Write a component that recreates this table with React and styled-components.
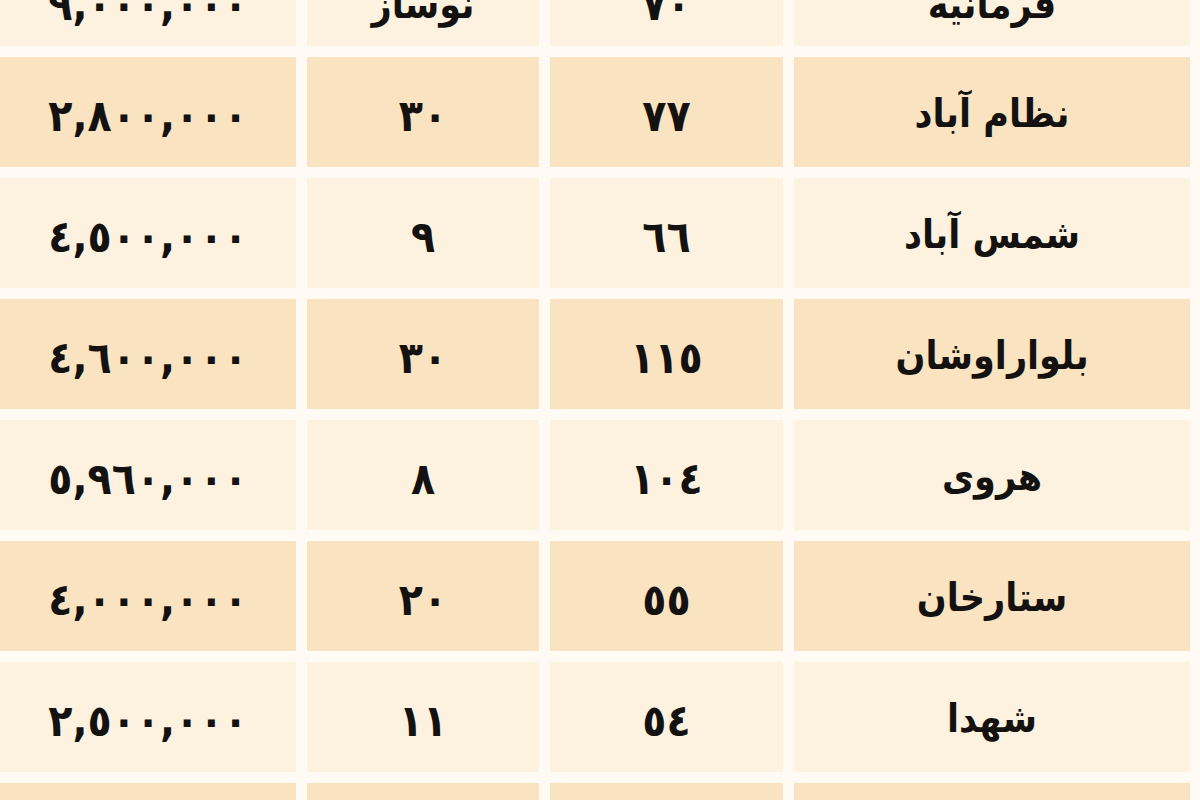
import React from 'react'
import styled, { createGlobalStyle } from 'styled-components'

const GlobalStyle = createGlobalStyle`
    html, body {
        margin: 0;
        padding: 0;
        background: #fffaf3;
    }
    body {
        font-family: "DejaVu Sans", "Noto Sans", sans-serif;
    }
`

const rows = [
    { name: 'فرمانیه', area: '٧٠', age: 'نوساز', price: '٩,٠٠٠,٠٠٠' },
    { name: 'نظام آباد', area: '٧٧', age: '٣٠', price: '٢,٨٠٠,٠٠٠' },
    { name: 'شمس آباد', area: '٦٦', age: '٩', price: '٤,٥٠٠,٠٠٠' },
    { name: 'بلواراوشان', area: '١١٥', age: '٣٠', price: '٤,٦٠٠,٠٠٠' },
    { name: 'هروی', area: '١٠٤', age: '٨', price: '٥,٩٦٠,٠٠٠' },
    { name: 'ستارخان', area: '٥٥', age: '٢٠', price: '٤,٠٠٠,٠٠٠' },
    { name: 'شهدا', area: '٥٤', age: '١١', price: '٢,٥٠٠,٠٠٠' },
    { name: 'پونک', area: '٦٠', age: '٥', price: '٣,٢٠٠,٠٠٠' },
]

const App = () => {
    return (
        <>
            <GlobalStyle />
            <Viewport>
                <Table>
                    {rows.map((row, i) => (
                        <Row key={i} $first={i === 0}>
                            <Cell $dark={i % 2 === 1} $text>{row.name}</Cell>
                            <Cell $dark={i % 2 === 1}>{row.area}</Cell>
                            <Cell $dark={i % 2 === 1} $text={i === 0}>{row.age}</Cell>
                            <Cell $dark={i % 2 === 1}>
                                <Price>{row.price}</Price>
                            </Cell>
                        </Row>
                    ))}
                </Table>
            </Viewport>
        </>
    )
}

const Viewport = styled.div`
    width: 1200px;
    height: 800px;
    overflow: hidden;
    background: #fffaf3;
`

// the table is scrolled, so its first row is partly above the top edge
const Table = styled.div`
    direction: rtl;
    display: flex;
    flex-direction: column;
    gap: 11px;
    margin-top: -64px;
    padding-right: 10px;
`

const Row = styled.div`
    display: grid;
    grid-template-columns: 396px 233px 232px 1fr;
    column-gap: 11px;
    height: 110px;

    ${(p) => p.$first && '& > div { padding-top: 26px; }'}
`

const Cell = styled.div`
    display: flex;
    align-items: center;
    justify-content: center;
    background: ${(p) => (p.$dark ? '#fae3c1' : '#fdf2e0')};
    color: #141210;
    font-family: "DejaVu Sans Condensed", "DejaVu Sans", sans-serif;
    font-weight: 700;
    font-size: ${(p) => (p.$text ? '39px' : '44px')};
    padding-top: ${(p) => (p.$text ? '2px' : '6px')};
    box-sizing: border-box;
`

const Price = styled.span`
    direction: ltr;
    unicode-bidi: isolate;
`

export default App
